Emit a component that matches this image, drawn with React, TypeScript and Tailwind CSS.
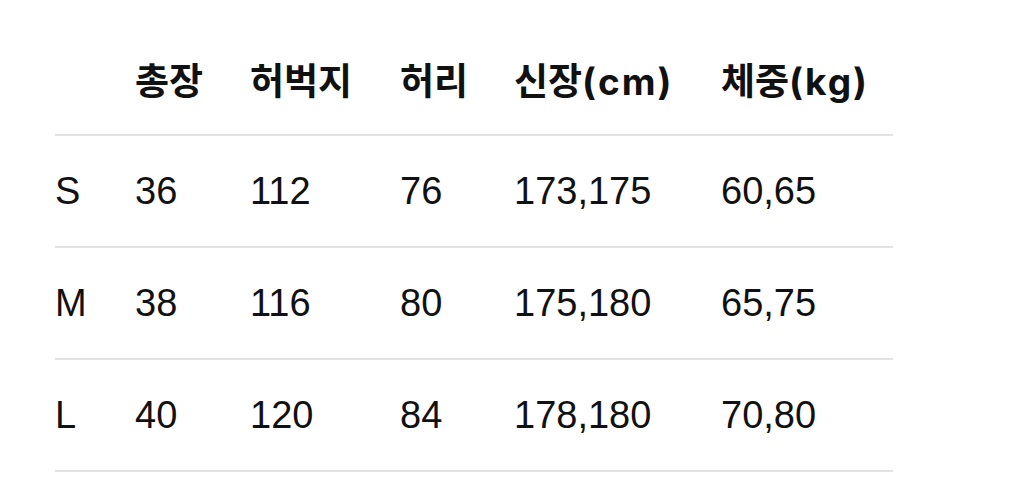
import React from "react";

const cols = "grid grid-cols-[80px_115px_150px_114px_207px_172px]";

const header: [string, string][] = [
  ["", ""],
  ["총장", ""],
  ["허벅지", ""],
  ["허리", ""],
  ["신장", "(cm)"],
  ["체중", "(kg)"],
];

const rows = [
  ["S", "36", "112", "76", "173,175", "60,65"],
  ["M", "38", "116", "80", "175,180", "65,75"],
  ["L", "40", "120", "84", "178,180", "70,80"],
];

export default function App() {
  return (
    <div className="w-[1024px] h-[497px] bg-white overflow-hidden pt-6 pl-[55px] text-[#111] font-['Liberation_Sans','Noto_Sans_CJK_KR',sans-serif]">
      <div className="w-[838px]">
        <div className={`${cols} h-[112px] items-center border-b-2 border-[#e2e2e2]`}>
          {header.map(([ko, unit], i) => (
            <div key={i} className="text-[37px] font-bold leading-none pt-[4px] font-['Inter','Noto_Sans_CJK_KR',sans-serif]">
              {ko}
              {unit && <span className="tracking-[2px]">{unit}</span>}
            </div>
          ))}
        </div>
        {rows.map((r) => (
          <div key={r[0]} className={`${cols} h-[112px] items-center border-b-2 border-[#e2e2e2]`}>
            {r.map((c, i) => (
              <div key={i} className="text-[38px] leading-none">
                {c}
              </div>
            ))}
          </div>
        ))}
      </div>
    </div>
  );
}
